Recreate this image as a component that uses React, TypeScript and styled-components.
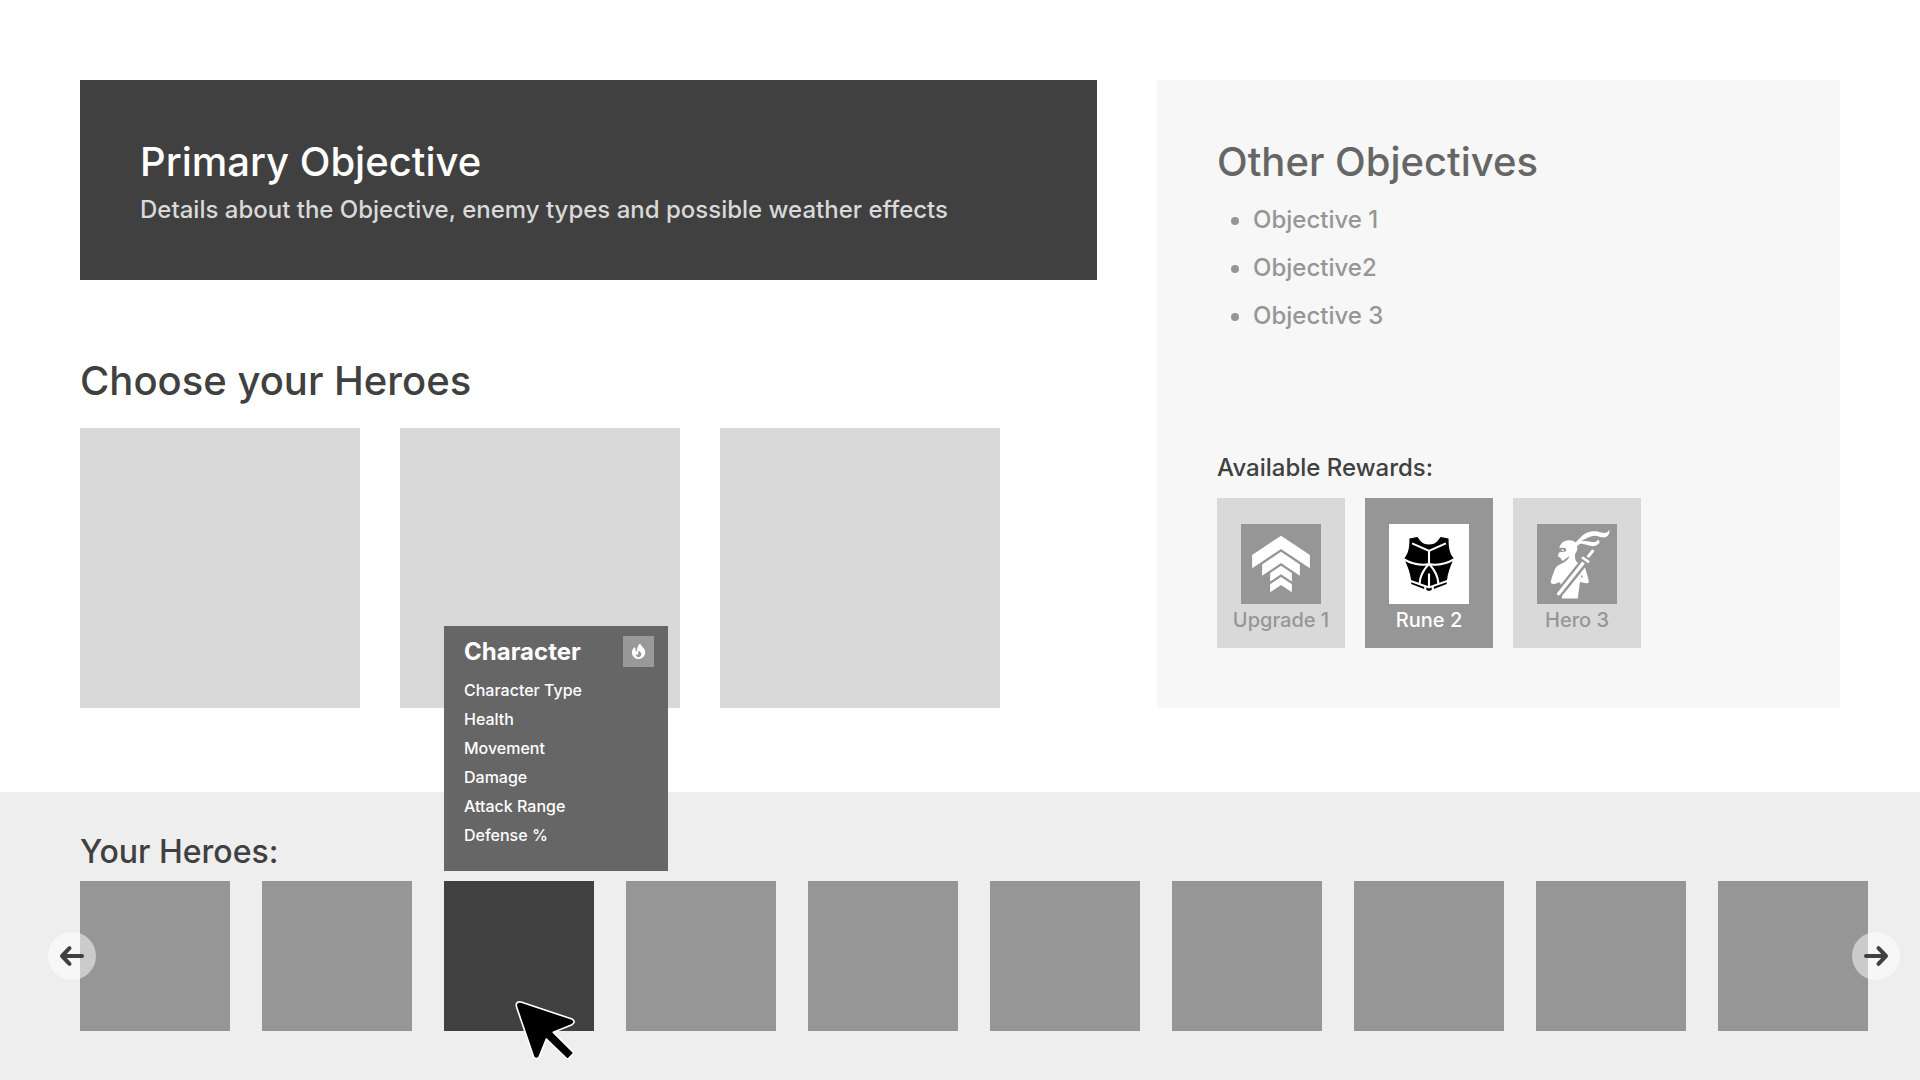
import React, { useState } from "react";
import styled, { createGlobalStyle } from "styled-components";
import { GiChestArmor, GiNinjaHeroicStance, GiUpgrade } from "react-icons/gi";
import { HiFire } from "react-icons/hi";
import type { IconType } from "react-icons";

const color = {
  ink: "#404040",
  slate: "#666666",
  mid: "#969696",
  light: "#d9d9d9",
  band: "#eeeeee",
  panel: "#f7f7f7",
  white: "#ffffff",
};

const GlobalStyle = createGlobalStyle`
  *, *::before, *::after { box-sizing: border-box; }
  body {
    margin: 0;
    background: ${color.white};
    color: ${color.ink};
    font-family: Inter, "Liberation Sans", sans-serif;
    font-weight: 500;
    overflow-x: hidden;
  }
  h1, h2, h3, p, ul { margin: 0; padding: 0; }
  button { font: inherit; border: 0; padding: 0; cursor: pointer; }
`;

const Page = styled.div`
  min-height: 100vh;
  display: flex;
  flex-direction: column;
`;

const Mission = styled.main`
  display: grid;
  grid-template-columns: minmax(0, 1017fr) minmax(0, 683fr);
  gap: 60px;
  padding: 80px 80px 84px;
`;

const MissionColumn = styled.div`
  display: flex;
  flex-direction: column;
  justify-content: space-between;
  gap: 77px;
`;

const Heading = styled.h2<{ $tone: string }>`
  font-size: 40px;
  line-height: 48px;
  font-weight: 500;
  color: ${(p) => p.$tone};
`;

const PrimaryCard = styled.section`
  padding: 58px 60px 56px;
  background: ${color.ink};
`;

const PrimaryDetails = styled.p`
  margin-top: 9px;
  font-size: 24px;
  line-height: 29px;
  color: ${color.light};
`;

const ChooseSection = styled.section`
  display: flex;
  flex-direction: column;
  gap: 23px;
`;

const SlotRow = styled.div`
  display: flex;
  gap: 40px;
`;

const Slot = styled.button`
  width: 280px;
  height: 280px;
  background: ${color.light};
`;

const OtherCard = styled.aside`
  display: flex;
  flex-direction: column;
  justify-content: space-between;
  gap: 60px;
  padding: 58px 60px 60px;
  background: ${color.panel};
`;

const ObjectiveList = styled.ul`
  && { padding-left: 36px; }
  margin-top: 10px;
  font-size: 24px;
  line-height: 48px;
  color: ${color.mid};
`;

const RewardTitle = styled.h3`
  margin-bottom: 16px;
  font-size: 24px;
  line-height: 29px;
  font-weight: 500;
`;

const RewardRow = styled.div`
  display: flex;
  gap: 20px;
`;

const RewardCard = styled.button<{ $active: boolean }>`
  display: flex;
  flex-direction: column;
  align-items: center;
  gap: 4px;
  width: 128px;
  padding: 26px 0 16px;
  font-size: 20px;
  line-height: 24px;
  color: ${(p) => (p.$active ? color.white : color.mid)};
  background: ${(p) => (p.$active ? color.mid : color.light)};
`;

const RewardIcon = styled.span<{ $active: boolean; $align: string }>`
  display: flex;
  align-items: center;
  justify-content: ${(p) => p.$align};
  width: 80px;
  height: 80px;
  color: ${(p) => (p.$active ? "#000000" : color.white)};
  background: ${(p) => (p.$active ? color.white : color.mid)};
`;

const Roster = styled.section`
  flex: 1;
  padding: 40px 0 49px 80px;
  background: ${color.band};
`;

const RosterTitle = styled.h2`
  margin-bottom: 10px;
  font-size: 32px;
  line-height: 39px;
  font-weight: 500;
`;

const Carousel = styled.div`
  position: relative;
`;

const HeroRow = styled.div`
  display: flex;
  gap: 32px;
`;

const HeroCell = styled.div`
  position: relative;
  flex: none;
`;

const HeroTile = styled.button<{ $active: boolean }>`
  display: block;
  width: 150px;
  height: 150px;
  background: ${(p) => (p.$active ? color.ink : color.mid)};
`;

const ScrollButton = styled.button<{ $side: "left" | "right" }>`
  position: absolute;
  top: 51px;
  ${(p) => (p.$side === "left" ? "left: -32px;" : "right: 20px;")}
  display: grid;
  place-items: center;
  width: 48px;
  height: 48px;
  border-radius: 50%;
  color: ${color.ink};
  background: rgba(255, 255, 255, 0.5);

  svg { transform: ${(p) => (p.$side === "left" ? "none" : "scaleX(-1)")}; }
`;

const Tooltip = styled.div`
  position: absolute;
  left: 0;
  bottom: calc(100% + 10px);
  width: 224px;
  padding: 10px 14px 21px 20px;
  color: ${color.white};
  background: ${color.slate};
`;

const TooltipHeader = styled.div`
  display: flex;
  align-items: center;
  justify-content: space-between;
  margin-bottom: 9px;
`;

const TooltipTitle = styled.h3`
  font-size: 24px;
  line-height: 31px;
  font-weight: 700;
`;

const ElementBadge = styled.span`
  display: grid;
  place-items: center;
  width: 31px;
  height: 31px;
  background: #999999;
`;

const StatList = styled.ul`
  list-style: none;
  font-size: 16px;
  line-height: 29px;
`;

const Pointer = styled.svg`
  position: absolute;
  left: 71px;
  top: 119px;
  width: 62px;
  height: 61px;
  pointer-events: none;
`;

type Reward = { name: string; icon: IconType; size: number; align: string };

const rewards: Reward[] = [
  { name: "Upgrade 1", icon: GiUpgrade, size: 64, align: "center" },
  { name: "Rune 2", icon: GiChestArmor, size: 60, align: "center" },
  { name: "Hero 3", icon: GiNinjaHeroicStance, size: 74, align: "flex-end" },
];
const objectives = ["Objective 1", "Objective2", "Objective 3"];
const stats = ["Character Type", "Health", "Movement", "Damage", "Attack Range", "Defense %"];
const slots = [1, 2, 3];
const heroes = [1, 2, 3, 4, 5, 6, 7, 8, 9, 10];

function Arrow() {
  return (
    <svg width="26" height="24" viewBox="0 0 26 24" fill="none" stroke="currentColor" strokeWidth="4" strokeLinecap="round" strokeLinejoin="round" aria-hidden="true">
      <path d="M23 12H3M10.5 4.2L3 12L10.5 19.8" />
    </svg>
  );
}

function HeroTooltip() {
  return (
    <Tooltip role="tooltip">
      <TooltipHeader>
        <TooltipTitle>Character</TooltipTitle>
        <ElementBadge>
          <HiFire size={19} aria-hidden="true" />
        </ElementBadge>
      </TooltipHeader>
      <StatList>
        {stats.map((stat) => (
          <li key={stat}>{stat}</li>
        ))}
      </StatList>
    </Tooltip>
  );
}

export default function App() {
  const [reward, setReward] = useState("Rune 2");
  const [hero, setHero] = useState(3);

  return (
    <Page>
      <GlobalStyle />
      <Mission>
        <MissionColumn>
          <PrimaryCard>
            <Heading as="h1" $tone={color.white}>Primary Objective</Heading>
            <PrimaryDetails>
              Details about the Objective, enemy types and possible weather effects
            </PrimaryDetails>
          </PrimaryCard>
          <ChooseSection>
            <Heading $tone={color.ink}>Choose your Heroes</Heading>
            <SlotRow>
              {slots.map((n) => (
                <Slot key={n} type="button" aria-label={`Hero slot ${n}`} />
              ))}
            </SlotRow>
          </ChooseSection>
        </MissionColumn>
        <OtherCard>
          <div>
            <Heading $tone={color.slate}>Other Objectives</Heading>
            <ObjectiveList>
              {objectives.map((o) => (
                <li key={o}>{o}</li>
              ))}
            </ObjectiveList>
          </div>
          <div>
            <RewardTitle>Available Rewards:</RewardTitle>
            <RewardRow>
              {rewards.map(({ name, icon: Icon, size, align }) => (
                <RewardCard
                  key={name}
                  type="button"
                  $active={name === reward}
                  aria-pressed={name === reward}
                  onClick={() => setReward(name)}
                >
                  <RewardIcon $active={name === reward} $align={align}>
                    <Icon size={size} aria-hidden="true" />
                  </RewardIcon>
                  {name}
                </RewardCard>
              ))}
            </RewardRow>
          </div>
        </OtherCard>
      </Mission>
      <Roster>
        <RosterTitle>Your Heroes:</RosterTitle>
        <Carousel>
          <HeroRow>
            {heroes.map((n) => (
              <HeroCell key={n}>
                <HeroTile
                  type="button"
                  aria-label={`Hero ${n}`}
                  $active={n === hero}
                  onClick={() => setHero(n)}
                />
                {n === hero && (
                  <>
                    <HeroTooltip />
                    <Pointer viewBox="75 60 186 183" aria-hidden="true">
                      <path
                        d="M93 66L246 117Q259 125 246 134L190 157L249 216Q252 219 249 222L236 235Q232 238 229 235L169 177L148 230Q141 241 131 231L79 79Q77 63 93 66Z"
                        fill="#000000"
                        stroke="#ffffff"
                        strokeWidth="5"
                        strokeLinejoin="round"
                      />
                    </Pointer>
                  </>
                )}
              </HeroCell>
            ))}
          </HeroRow>
          <ScrollButton type="button" $side="left" aria-label="Previous heroes">
            <Arrow />
          </ScrollButton>
          <ScrollButton type="button" $side="right" aria-label="Next heroes">
            <Arrow />
          </ScrollButton>
        </Carousel>
      </Roster>
    </Page>
  );
}
